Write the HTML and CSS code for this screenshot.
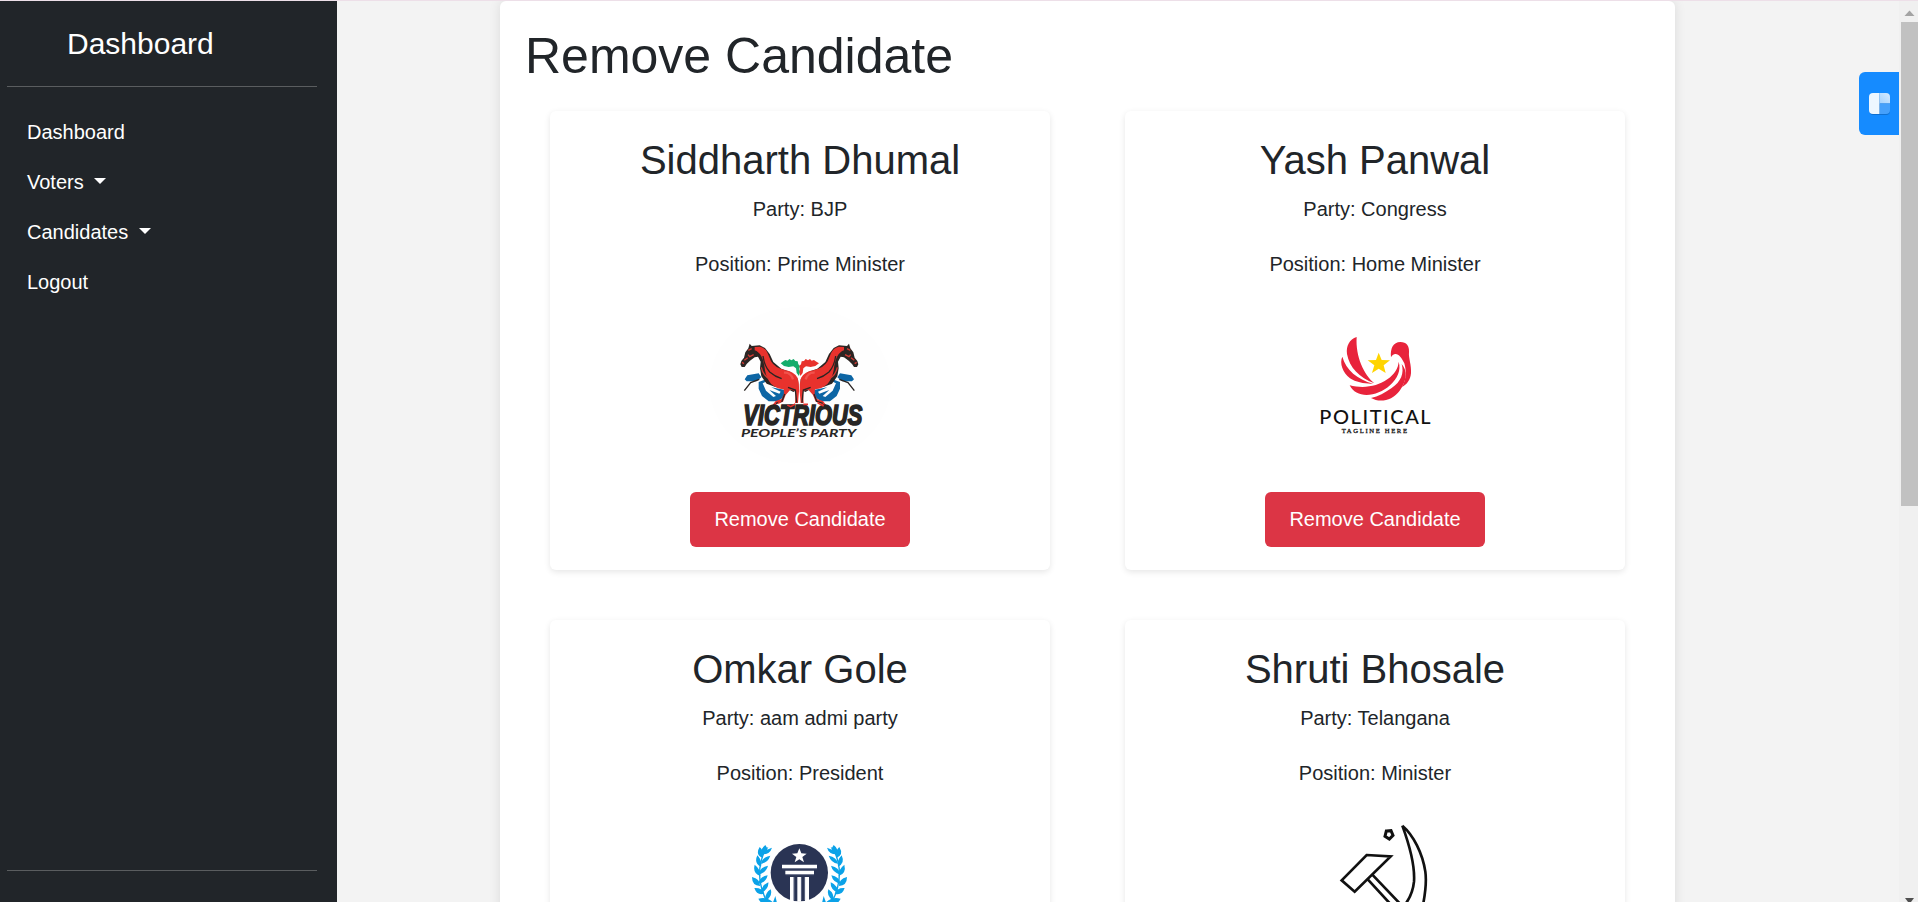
FILE: index.html
```html
<!DOCTYPE html>
<html lang="en">
<head>
<meta charset="utf-8">
<title>Remove Candidate</title>
<link rel="stylesheet" href="styles.css">
</head>
<body>
<div class="topline"></div>
<div class="app">
  <aside class="sidebar">
    <a class="brand">Dashboard</a>
    <div class="rule"></div>
    <nav class="nav">
      <a class="nav-link">Dashboard</a>
      <a class="nav-link">Voters<span class="caret"></span></a>
      <a class="nav-link">Candidates<span class="caret caret-wide"></span></a>
      <a class="nav-link">Logout</a>
    </nav>
    <div class="rule rule-bottom"></div>
  </aside>
  <main class="content">
    <section class="panel">
      <h1 class="title">Remove Candidate</h1>
      <div class="cards">
        <article class="card">
          <h2 class="name">Siddharth Dhumal</h2>
          <p class="line">Party: BJP</p>
          <p class="line">Position: Prime Minister</p>
          <svg class="logo" viewBox="0 0 200 188">
            <g transform="translate(0 6) scale(.33333)">
              <ellipse cx="300" cy="225" rx="272" ry="235" fill="#fefefe"/>
              <defs>
                <g id="horse">
                  <path fill="#0d66a5" d="M134 208l8-12 34-6 8 12-14 12-30 0zM176 216l26-10 60 26-8 28-22 14-26 0-20-16-10-22z"/>
                  <path fill="#fdfdfd" d="M204 212l56 20-4 8-42-8 28 13-4 6-30-11 20 18-8 3-22-19-10-22z"/>
                  <path fill="#2b2523" d="M149 101l6 7 24-2 16 8 14 18 11 24 24 20 28 10 22 22 2 28-16 10-22-12-34-4-24-9-16-22-4-24 2-20-8-15-10 2-14 10-10 10-6 9-9 0-4-8 3-10 8-10 4-16 9-12z"/>
                  <path fill="#e8322d" d="M164 111l16-1q16 4 23 20l10 24q12 20 40 26 30 4 40 24 5 16 4 40l-3 35-9 0 2-36-16-4-14 16-8 20-18 6-9 12-5-7 10-13 18-6 7-17-1-12q-22-2-38-17-14-16-18-40-3-28-11-42-8-14-20-18z"/>
                  <path fill="none" stroke="#2b2523" stroke-width="4" d="M189 138q4 30 20 48 16 14 36 20M178 208l-26 10-19 24M264 232l22 8 4 38M254 252l-8 22-18 6"/>
                  <path fill="none" stroke="#f1524c" stroke-width="7" d="M252 188q20-2 27 20"/>
                  <path fill="none" stroke="#d23a33" stroke-width="4" d="M145 121l10-5M144 134l5 6 12-6M133 151l10-8M126 157l6 4M184 172q5 24 24 34"/>
                </g>
              </defs>
              <use href="#horse"/>
              <use href="#horse" transform="translate(596 0) scale(-1 1)"/>
              <path fill="#14ad6b" d="M242 160l8-6 6-4 7 2 5-5 6 4 7-4 5 6 7 1 2 9 5 5-2 9 2 9-3 12-7-9-2-14-8-6-14 2-14-3z"/>
              <path fill="#e8322d" d="M357 160l-10-6-5-4-7 2-5-5-6 4-7-4-5 6-7 1-2 9-5 5 2 9-2 9 3 12 7-9 2-14 8-6 14 2 14-3z"/>
              <text x="130" y="345" class="logo-bold" textLength="357" lengthAdjust="spacingAndGlyphs">VICTRIOUS</text>
              <path fill="none" stroke="#e8322d" stroke-width="5" d="M235 280l8-8M262 285l10 5 14-8M310 283l14 0M353 278l18 10"/>
              <text x="123" y="381" class="logo-sub" textLength="346" lengthAdjust="spacingAndGlyphs">PEOPLE’S PARTY</text>
            </g>
          </svg>
          <button class="remove">Remove Candidate</button>
        </article>
        <article class="card">
          <h2 class="name">Yash Panwal</h2>
          <p class="line">Party: Congress</p>
          <p class="line">Position: Home Minister</p>
          <svg class="logo" viewBox="0 0 200 188">
            <g transform="translate(15 6) scale(.33333)">
              <g fill="#e8233b">
                <path d="M200 81C178 88 168 108 171 132C178 172 208 203 253 220C222 194 196 140 200 81Z"/>
                <path d="M157 140C148 160 158 187 180 205C198 217 226 222 249 221C202 208 168 180 157 140Z"/>
                <path d="M179 226C220 236 262 230 292 208C314 192 325 174 326 155C334 180 322 206 300 226C262 261 199 268 179 226Z"/>
                <path d="M335 162C343 190 333 215 305 234C285 248 265 260 243 264C270 279 307 272 329 242C351 213 353 182 335 162Z"/>
                <path d="M303 142C300 115 310 96 331 96C350 96 358 108 357 126C355 145 365 165 363 190C361 210 350 225 336 231C350 207 349 181 343 160C335 143 325 130 315 132C309 133 305 137 303 142Z"/>
              </g>
              <path fill="#ffd400" d="M266 128l9 22 25 1-19 15 6 23-21-13-20 13 7-23-20-15 25-1z"/>
              <text x="88" y="342" class="logo-word" textLength="334">POLITICAL</text>
              <text x="155" y="368" class="logo-tag" textLength="196">TAGLINE HERE</text>
            </g>
          </svg>
          <button class="remove">Remove Candidate</button>
        </article>
        <article class="card">
          <h2 class="name">Omkar Gole</h2>
          <p class="line">Party: aam admi party</p>
          <p class="line">Position: President</p>
          <svg class="logo" viewBox="0 0 200 188">
            <g transform="translate(20 7) scale(.33333)">
              <circle cx="238" cy="158" r="86" fill="#2a3454"/>
              <path fill="#fff" d="M238 85l6 15 16 1-13 10 5 16-14-9-14 9 5-16-13-10 16-1zM186 134h105v11H186zM196 152h86v11H196zM210 171h11v74h-11zM232 171h11v74h-11zM255 171h12v74h-12z"/>
              <path fill="none" stroke="#8289a0" stroke-width="2" d="M187 146h104M197 164h85M222 171v70M244 171v70M254 171v70"/>
              <defs>
                <g id="laurel" fill="#0ba2e8">
                  <path d="M136 75l5 8 4-2-4 8 15-6q-6 20-28 20-10-14 8-28z"/>
                  <path d="M119 81q15 13 8 32-22-9-8-32zM151 107q-7 21-28 24 4-20 28-24z"/>
                  <path d="M112 106q15 15 11 34-22-10-11-34zM144 137q-5 20-28 27 3-22 28-27z"/>
                  <path d="M104 134q18 14 17 34-24-8-17-34zM143 166q-5 22-29 26 6-23 29-26z"/>
                  <path d="M96 171q25 6 24 27-24-1-24-27zM145 187q2 22-24 33 3-24 24-33z"/>
                  <path d="M103 204q23-2 30 17-22 7-30-17zM152 208q7 19-15 36-5-23 15-36z"/>
                  <path d="M115 236q25-8 45 12l-22 12q-14-8-23-24zM166 228l6 25-18 8z"/>
                  <path fill="none" stroke="#0ba2e8" stroke-width="4" d="M133 96q-32 70 8 150"/>
                </g>
              </defs>
              <use href="#laurel"/>
              <use href="#laurel" transform="translate(477 0) scale(-1 1)"/>
            </g>
          </svg>
        </article>
        <article class="card">
          <h2 class="name">Shruti Bhosale</h2>
          <p class="line">Party: Telangana</p>
          <p class="line">Position: Minister</p>
          <svg class="logo" viewBox="0 0 200 188">
            <g transform="translate(35 -13) scale(.33333)" fill="none" stroke="#111" stroke-width="8">
              <path d="M170 165l72 4L134 275 95 241zM174 239l70 76M189 226l80 84"/>
              <path d="M277 77C310 105 338 160 346 215C351 250 346 280 338 320M277 77C300 140 315 200 312 245C309 275 300 295 284 315"/>
              <path stroke-width="9" d="M229 93l14-1 6 14-11 11-13-8z"/>
            </g>
          </svg>
        </article>
      </div>
    </section>
  </main>
  <div class="scrollbar">
    <svg class="arrow" viewBox="0 0 17 21"><path fill="#a3a3a3" d="M8.500 9.500l5 5.500h-10z"/></svg>
    <div class="thumb"></div>
    <svg class="arrow arrow-down" viewBox="0 0 17 4"><path fill="#505050" d="M4 0h9l-3 4H7z"/></svg>
  </div>
</div>
<div class="widget">
  <svg class="widget-icon" viewBox="0 0 22 23">
    <defs><linearGradient id="pane" x1="0" y1="1" x2="1" y2="0"><stop offset="0" stop-color="#a5d2fe"/><stop offset="1" stop-color="#d7ebff"/></linearGradient></defs>
    <rect x=".5" y="1.500" width="20.500" height="20.500" rx="4" fill="#0f6fd0"/>
    <path fill="#eef7ff" d="M4 0h6.500v21H4a4 4 0 0 1-4-4V4a4 4 0 0 1 4-4z"/>
    <path fill="url(#pane)" d="M10.500 0H17a4 4 0 0 1 4 4v6.500H10.500z"/>
    <path fill="#46a0fb" d="M11 10.500h10V17a4 4 0 0 1-4 4h-6z"/>
  </svg>
</div>
</body>
</html>
```
FILE: styles.css
```css
* { box-sizing: border-box; }
html, body { height: 100%; }
body {
  margin: 0;
  overflow: hidden;
  background: #f3f3f3;
  color: #212529;
  font: 20px/30px "Liberation Sans", Arial, sans-serif;
}
.topline { height: 1px; background: #eddfe8; }
.app { display: flex; height: 901px; overflow: hidden; }
.sidebar {
  display: flex;
  flex-direction: column;
  width: 337px;
  padding: 20px 20px 31px 7px;
  background: #212529;
  color: #fff;
}
.brand { padding-left: 60px; font-size: 30px; line-height: 45px; }
.rule { height: 1px; margin: 20px 0; background: #5a5d5f; }
.rule-bottom { margin: auto 0 0; }
.nav { display: flex; flex-direction: column; }
.nav-link { display: flex; align-items: center; padding: 10px 20px; }
.caret {
  margin: -3px 0 0 10px;
  border: 6px solid transparent;
  border-top-color: #fff;
  border-bottom: 0;
}
.caret-wide { margin-left: 11px; }
.content { flex: 1; padding-left: 163px; }
.panel {
  width: 1175px;
  padding: 25px 25px 50px;
  border-radius: 6px;
  background: #fff;
  box-shadow: 0 0 12px rgba(0, 0, 0, .1);
}
.title { margin: 0 0 25px; font-size: 50px; font-weight: 400; line-height: 60px; }
.cards { display: grid; grid-template-columns: 500px 500px; gap: 50px 75px; padding: 0 25px; }
.card {
  display: flex;
  flex-direction: column;
  align-items: center;
  height: 459px;
  padding: 25px;
  border-radius: 6px;
  background: #fff;
  box-shadow: 0 2px 6px rgba(0, 0, 0, .1);
}
.name { margin: 0 0 10px; font-size: 40px; font-weight: 400; line-height: 48px; }
.line { margin: 0 0 25px; }
.logo { flex: none; width: 200px; height: 188px; }
.logo-bold { font: italic 700 86px "Liberation Sans", Arial, sans-serif; fill: #272625; stroke: #272625; stroke-width: 5px; }
.logo-sub { font: italic 700 33px Lato, sans-serif; fill: #272625; }
.logo-word { font: 500 60px Lato, sans-serif; fill: #111; }
.logo-tag { font: 20px "Liberation Serif", serif; fill: #222; stroke: #222; stroke-width: 1px; }
.remove {
  flex: none;
  height: 55px;
  padding: 0 24.500px 2px;
  border: 0;
  border-radius: 6px;
  background: #dc3545;
  color: #fff;
  font: inherit;
}
.scrollbar {
  display: flex;
  flex-direction: column;
  width: 19px;
  padding-left: 2px;
  background: #f0f0f0;
}
.arrow { width: 17px; height: 21px; }
.thumb { height: 484px; background: #c1c1c1; }
.arrow-down { height: 4px; margin-top: auto; }
.widget {
  position: absolute;
  top: 72px;
  right: 19px;
  width: 40px;
  height: 63px;
  padding: 21px 0 0 10px;
  border-radius: 6px 0 0 6px;
  background: #158bff;
}
.widget-icon { display: block; width: 22px; height: 23px; }
```
